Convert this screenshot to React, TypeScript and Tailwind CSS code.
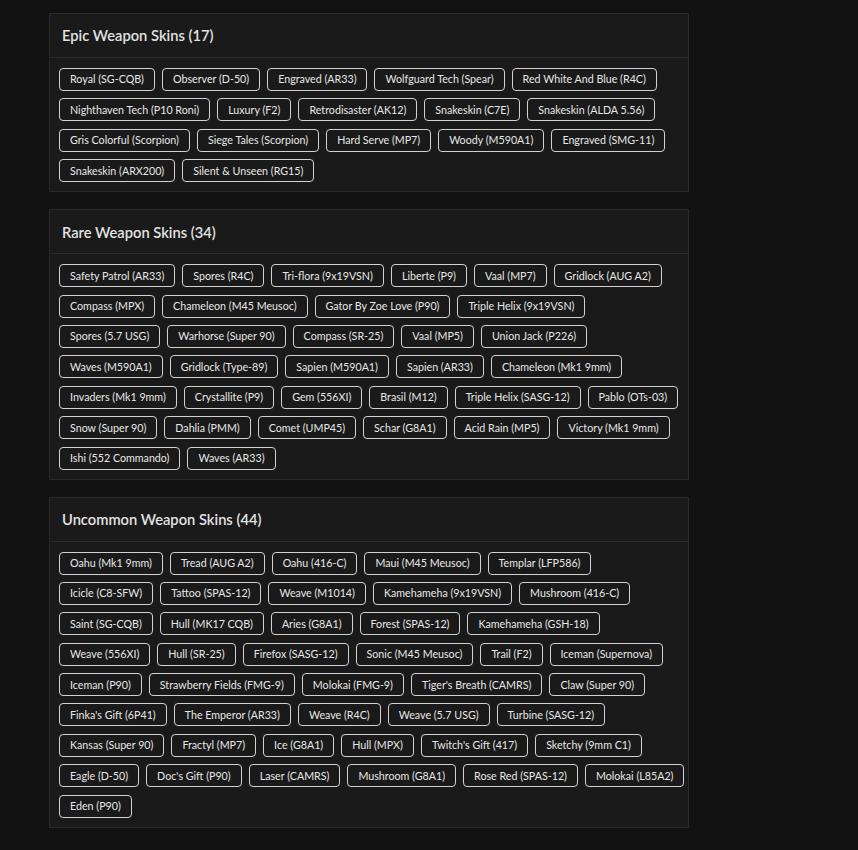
import React from "react";

type Section = {
  title: string;
  rows: string[][];
};

const sections: Section[] = [
  {
    title: "Epic Weapon Skins (17)",
    rows: [
      ["Royal (SG-CQB)", "Observer (D-50)", "Engraved (AR33)", "Wolfguard Tech (Spear)", "Red White And Blue (R4C)"],
      ["Nighthaven Tech (P10 Roni)", "Luxury (F2)", "Retrodisaster (AK12)", "Snakeskin (C7E)", "Snakeskin (ALDA 5.56)"],
      ["Gris Colorful (Scorpion)", "Siege Tales (Scorpion)", "Hard Serve (MP7)", "Woody (M590A1)", "Engraved (SMG-11)"],
      ["Snakeskin (ARX200)", "Silent & Unseen (RG15)"],
    ],
  },
  {
    title: "Rare Weapon Skins (34)",
    rows: [
      ["Safety Patrol (AR33)", "Spores (R4C)", "Tri-flora (9x19VSN)", "Liberte (P9)", "Vaal (MP7)", "Gridlock (AUG A2)"],
      ["Compass (MPX)", "Chameleon (M45 Meusoc)", "Gator By Zoe Love (P90)", "Triple Helix (9x19VSN)"],
      ["Spores (5.7 USG)", "Warhorse (Super 90)", "Compass (SR-25)", "Vaal (MP5)", "Union Jack (P226)"],
      ["Waves (M590A1)", "Gridlock (Type-89)", "Sapien (M590A1)", "Sapien (AR33)", "Chameleon (Mk1 9mm)"],
      ["Invaders (Mk1 9mm)", "Crystallite (P9)", "Gem (556XI)", "Brasil (M12)", "Triple Helix (SASG-12)", "Pablo (OTs-03)"],
      ["Snow (Super 90)", "Dahlia (PMM)", "Comet (UMP45)", "Schar (G8A1)", "Acid Rain (MP5)", "Victory (Mk1 9mm)"],
      ["Ishi (552 Commando)", "Waves (AR33)"],
    ],
  },
  {
    title: "Uncommon Weapon Skins (44)",
    rows: [
      ["Oahu (Mk1 9mm)", "Tread (AUG A2)", "Oahu (416-C)", "Maui (M45 Meusoc)", "Templar (LFP586)"],
      ["Icicle (C8-SFW)", "Tattoo (SPAS-12)", "Weave (M1014)", "Kamehameha (9x19VSN)", "Mushroom (416-C)"],
      ["Saint (SG-CQB)", "Hull (MK17 CQB)", "Aries (G8A1)", "Forest (SPAS-12)", "Kamehameha (GSH-18)"],
      ["Weave (556XI)", "Hull (SR-25)", "Firefox (SASG-12)", "Sonic (M45 Meusoc)", "Trail (F2)", "Iceman (Supernova)"],
      ["Iceman (P90)", "Strawberry Fields (FMG-9)", "Molokai (FMG-9)", "Tiger's Breath (CAMRS)", "Claw (Super 90)"],
      ["Finka's Gift (6P41)", "The Emperor (AR33)", "Weave (R4C)", "Weave (5.7 USG)", "Turbine (SASG-12)"],
      ["Kansas (Super 90)", "Fractyl (MP7)", "Ice (G8A1)", "Hull (MPX)", "Twitch's Gift (417)", "Sketchy (9mm C1)"],
      ["Eagle (D-50)", "Doc's Gift (P90)", "Laser (CAMRS)", "Mushroom (G8A1)", "Rose Red (SPAS-12)", "Molokai (L85A2)"],
      ["Eden (P90)"],
    ],
  },
];

function SkinTag({ name }: { name: string }) {
  return (
    <span className="flex h-[23px] items-center whitespace-nowrap rounded-[4px] border border-[#d2d2d2] px-[10px] text-[10.7px] text-[#e8e8e8]">
      {name}
    </span>
  );
}

function SkinCard({ section }: { section: Section }) {
  return (
    <div className="border border-[#2a2a2a] bg-[#1a1a1a]">
      <div className="flex h-[44px] items-center border-b border-[#2a2a2a] px-3">
        <h2 className="text-[14.7px] font-semibold text-[#e2e2e2]">{section.title}</h2>
      </div>
      <div className="flex flex-col gap-[7.4px] px-[9px] pb-[9px] pt-[10px]">
        {section.rows.map((row, i) => (
          <div key={i} className="flex gap-[7px]">
            {row.map((name) => (
              <SkinTag key={name} name={name} />
            ))}
          </div>
        ))}
      </div>
    </div>
  );
}

export default function App() {
  return (
    <div className="min-h-[850px] bg-[#121212] pl-[49px] pt-[13px] font-['Lato',sans-serif]">
      <div className="flex w-[640px] flex-col gap-[17px]">
        {sections.map((s) => (
          <SkinCard key={s.title} section={s} />
        ))}
      </div>
    </div>
  );
}
